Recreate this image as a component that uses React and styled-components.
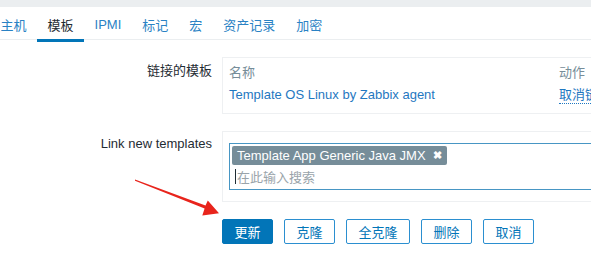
import React from 'react';
import styled, { createGlobalStyle } from 'styled-components';

const GlobalStyle = createGlobalStyle`
    body {
        margin: 0;
        background: #ffffff;
        font-family: "Liberation Sans", "Noto Sans CJK SC", sans-serif;
        font-size: 13px;
        color: #1f2c33;
        overflow: hidden;
    }
`;

const tabs = ['主机', '模板', 'IPMI', '标记', '宏', '资产记录', '加密'];
const actions = ['克隆', '全克隆', '删除', '取消'];

export default function App() {
    return (
        <Page>
            <GlobalStyle />
            <TopBand />
            <TabBar>
                {tabs.map((tab) => (
                    <Tab key={tab} active={tab === '模板'}>{tab}</Tab>
                ))}
            </TabBar>
            <Form>
                <Label>链接的模板</Label>
                <FieldBox>
                    <LinkedTable>
                        <HeadCell>名称</HeadCell>
                        <HeadCell>动作</HeadCell>
                        <LinkCell>Template OS Linux by Zabbix agent</LinkCell>
                        <UnlinkCell>取消链接</UnlinkCell>
                    </LinkedTable>
                </FieldBox>

                <Label top="5px">Link new templates</Label>
                <FieldBox pad="11px 6px 11px 6px">
                    <MultiSelect>
                        <Tag>
                            Template App Generic Java JMX
                            <TagClose>✖</TagClose>
                        </Tag>
                        <SearchLine>
                            <Caret />
                            <Placeholder>在此输入搜索</Placeholder>
                        </SearchLine>
                    </MultiSelect>
                </FieldBox>

                <span />
                <ButtonRow>
                    <Button primary>更新</Button>
                    {actions.map((a) => (
                        <Button key={a}>{a}</Button>
                    ))}
                </ButtonRow>
            </Form>

            {/* red annotation arrow drawn over the form */}
            <Arrow width="591" height="255" viewBox="0 0 591 255">
                <polygon
                    points="135,179.6 205.5,205.6 207.8,200.6 219,213.2 202.3,215.6 204.6,208.4 135,180.8"
                    fill="#e8241c"
                />
            </Arrow>
        </Page>
    );
}

const Page = styled.div`
    position: relative;
    width: 591px;
    height: 255px;
    overflow: hidden;
`;

const TopBand = styled.div`
    height: 7px;
    background: #ebeef0;
`;

const TabBar = styled.div`
    display: flex;
    height: 32px;
    margin-left: -10px;
    border-bottom: 1px solid #ebeef0;
`;

const Tab = styled.div`
    display: flex;
    align-items: center;
    padding: 3px 10.5px 0 10.5px;
    height: 29px;
    color: ${(p) => (p.active ? '#1f2c33' : '#2a82c4')};
    border-bottom: 3px solid ${(p) => (p.active ? '#0275b8' : 'transparent')};
    margin-bottom: -1px;
    white-space: nowrap;
`;

const Form = styled.div`
    display: grid;
    grid-template-columns: 212px 480px;
    column-gap: 10px;
    row-gap: 17px;
    padding-top: 17px;
`;

const Label = styled.div`
    text-align: right;
    padding-top: ${(p) => p.top || '3px'};
    white-space: nowrap;
`;

const FieldBox = styled.div`
    border: 1px solid #eef0f2;
    padding: ${(p) => p.pad || '7px 6px 9px 6px'};
`;

const LinkedTable = styled.div`
    display: grid;
    grid-template-columns: 330px auto;
    row-gap: 6px;
`;

const HeadCell = styled.div`
    color: #768d99;
    line-height: 16px;
`;

const LinkCell = styled.div`
    color: #1f78c1;
    line-height: 16px;
`;

const UnlinkCell = styled.div`
    color: #1f78c1;
    line-height: 16px;
    white-space: nowrap;
    width: max-content;
    border-bottom: 1px dotted #1f78c1;
`;

const MultiSelect = styled.div`
    border: 1px solid #4796c4;
    padding: 2px 3px 3px 2px;
    display: flex;
    flex-direction: column;
    align-items: flex-start;
    gap: 2px;
    height: 40px;
`;

const Tag = styled.div`
    display: flex;
    align-items: center;
    gap: 7px;
    height: 19px;
    padding: 0 5px;
    background: #768d99;
    color: #ffffff;
    border-radius: 2px;
    white-space: nowrap;
`;

const TagClose = styled.span`
    font-size: 11px;
    font-weight: bold;
`;

const SearchLine = styled.div`
    display: flex;
    align-items: center;
    height: 19px;
    padding-left: 3px;
`;

const Caret = styled.span`
    width: 1px;
    height: 15px;
    background: #1f2c33;
    margin-right: 1px;
`;

const Placeholder = styled.span`
    color: #9aa4aa;
`;

const ButtonRow = styled.div`
    display: flex;
    gap: 11px;
`;

const Button = styled.button`
    height: 25px;
    padding: 0 11.5px;
    font-family: inherit;
    font-size: 13px;
    border-radius: 2px;
    border: 1px solid ${(p) => (p.primary ? '#0275b8' : '#2b8fd0')};
    background: ${(p) => (p.primary ? '#0275b8' : '#ffffff')};
    color: ${(p) => (p.primary ? '#ffffff' : '#0275b8')};
    cursor: pointer;
`;

const Arrow = styled.svg`
    position: absolute;
    left: 0;
    top: 0;
    pointer-events: none;
`;
